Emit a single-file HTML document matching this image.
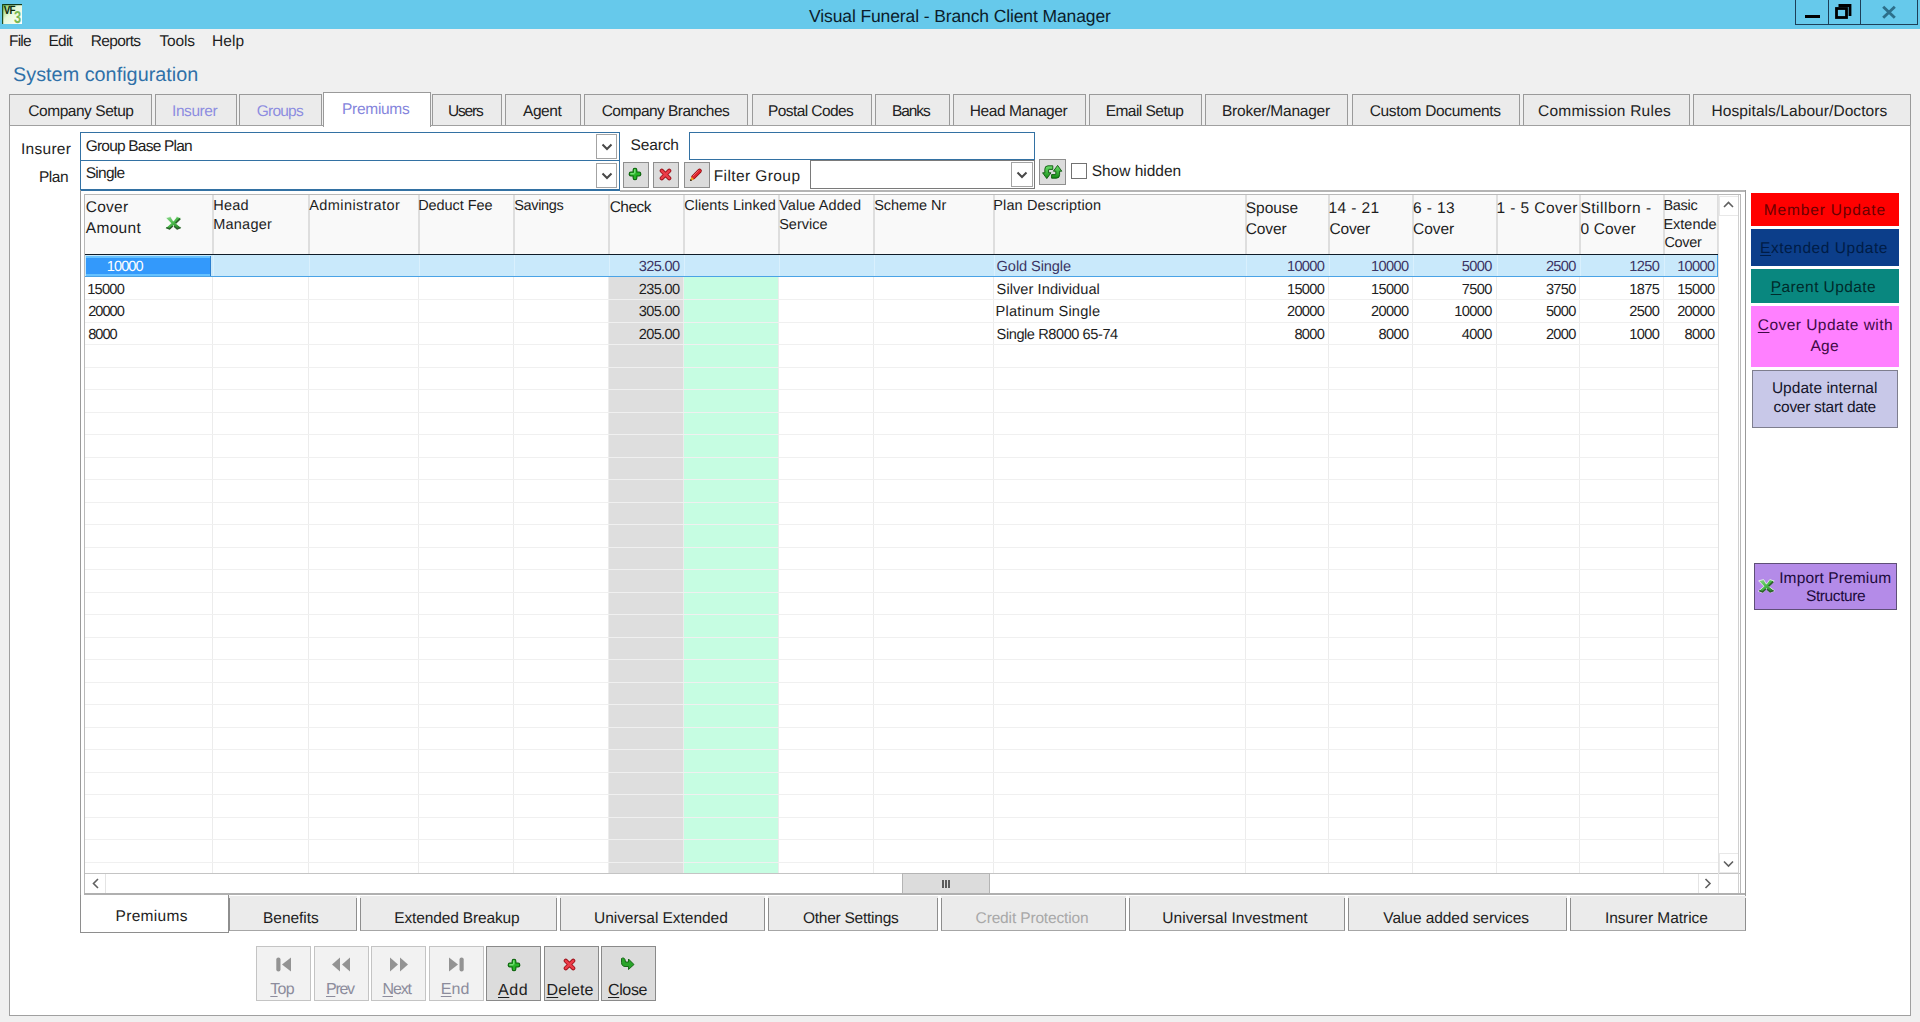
<!DOCTYPE html>
<html><head><meta charset="utf-8"><style>
html,body{margin:0;padding:0;}
body{text-rendering:geometricPrecision;width:1920px;height:1022px;overflow:hidden;background:#f0f0f0;position:relative;font-family:"Liberation Sans",sans-serif;}
body>div,body>svg{position:absolute;}

u{text-decoration:underline;text-underline-offset:2px;}
</style></head><body>
<div style="left:0px;top:0px;width:1920px;height:29px;background:#66c9eb"></div>
<svg style="left:2px;top:4px" width="20" height="20" viewBox="0 0 20 20"><defs><linearGradient id="vg" x1="0" y1="0" x2="1" y2="1"><stop offset="0" stop-color="#6fc24a"/><stop offset="0.45" stop-color="#e6f8d8"/><stop offset="1" stop-color="#ffffff"/></linearGradient></defs><rect x="0" y="0" width="20" height="20" fill="url(#vg)"/><rect x="0" y="0" width="20" height="1.2" fill="#123a1a"/><rect x="0" y="0" width="1.2" height="20" fill="#1f4f1f"/><text transform="translate(1.7,10.4) scale(0.82,1)" font-family="Liberation Sans" font-size="12" font-weight="bold" fill="#0f2a10" letter-spacing="-1">VF</text><text transform="translate(12,18.6) scale(0.78,1.05)" font-family="Liberation Sans" font-size="16.5" font-weight="bold" fill="#7bb955">3</text></svg>
<div style="left:809.00px;top:4.94px;font-size:17.5px;line-height:22px;color:#0b1d2b;white-space:nowrap;letter-spacing:-0.115px;">Visual Funeral - Branch Client Manager</div>
<div style="left:1795px;top:0px;width:34px;height:25px;box-sizing:border-box;border:1px solid #1c3f58;border-top:none"></div>
<div style="left:1828px;top:0px;width:33px;height:25px;box-sizing:border-box;border:1px solid #1c3f58;border-top:none"></div>
<div style="left:1860px;top:0px;width:58px;height:25px;box-sizing:border-box;border:1px solid #1c3f58;border-top:none"></div>
<div style="left:1805px;top:15px;width:15px;height:3px;background:#000"></div>
<svg style="left:1834px;top:4px" width="19" height="16" viewBox="0 0 19 16"><path d="M4.5 1.5h11.5v10.5" fill="none" stroke="#000" stroke-width="2.8"/><rect x="2.5" y="4.5" width="10" height="9" fill="none" stroke="#000" stroke-width="2.8"/></svg>
<svg style="left:1881px;top:5px" width="16" height="15" viewBox="0 0 16 15"><path d="M2.2 1.8L13.8 12.8M13.8 1.8L2.2 12.8" stroke="#2d6f8a" stroke-width="2.9"/></svg>
<div style="left:9.00px;top:31.73px;font-size:15.5px;line-height:19px;color:#1e1e1e;white-space:nowrap;letter-spacing:-0.785px;">File</div>
<div style="left:48.50px;top:31.73px;font-size:15.5px;line-height:19px;color:#1e1e1e;white-space:nowrap;letter-spacing:-0.767px;">Edit</div>
<div style="left:90.80px;top:31.73px;font-size:15.5px;line-height:19px;color:#1e1e1e;white-space:nowrap;letter-spacing:-0.670px;">Reports</div>
<div style="left:159.50px;top:31.73px;font-size:15.5px;line-height:19px;color:#1e1e1e;white-space:nowrap;letter-spacing:-0.159px;">Tools</div>
<div style="left:211.90px;top:31.73px;font-size:15.5px;line-height:19px;color:#1e1e1e;white-space:nowrap;letter-spacing:0.114px;">Help</div>
<div style="left:13.00px;top:62.84px;font-size:19.8px;line-height:25px;color:#2f70a8;white-space:nowrap;letter-spacing:0.031px;">System configuration</div>
<div style="left:9px;top:94px;width:143px;height:32px;box-sizing:border-box;background:#ebebeb;border:1px solid #9a9a9a;border-bottom:none"></div>
<div style="left:28.30px;top:102.23px;font-size:15.5px;line-height:19px;color:#222;white-space:nowrap;letter-spacing:-0.461px;">Company Setup</div>
<div style="left:155px;top:94px;width:82px;height:32px;box-sizing:border-box;background:#ebebeb;border:1px solid #9a9a9a;border-bottom:none"></div>
<div style="left:172.00px;top:102.23px;font-size:15.5px;line-height:19px;color:#8d8de0;white-space:nowrap;letter-spacing:-0.430px;">Insurer</div>
<div style="left:239px;top:94px;width:83px;height:32px;box-sizing:border-box;background:#ebebeb;border:1px solid #9a9a9a;border-bottom:none"></div>
<div style="left:256.70px;top:102.23px;font-size:15.5px;line-height:19px;color:#8d8de0;white-space:nowrap;letter-spacing:-0.756px;">Groups</div>
<div style="left:432px;top:94px;width:70px;height:32px;box-sizing:border-box;background:#ebebeb;border:1px solid #9a9a9a;border-bottom:none"></div>
<div style="left:448.00px;top:102.23px;font-size:15.5px;line-height:19px;color:#222;white-space:nowrap;letter-spacing:-1.181px;">Users</div>
<div style="left:505px;top:94px;width:76px;height:32px;box-sizing:border-box;background:#ebebeb;border:1px solid #9a9a9a;border-bottom:none"></div>
<div style="left:523.00px;top:102.23px;font-size:15.5px;line-height:19px;color:#222;white-space:nowrap;letter-spacing:-0.425px;">Agent</div>
<div style="left:584px;top:94px;width:164px;height:32px;box-sizing:border-box;background:#ebebeb;border:1px solid #9a9a9a;border-bottom:none"></div>
<div style="left:601.70px;top:102.23px;font-size:15.5px;line-height:19px;color:#222;white-space:nowrap;letter-spacing:-0.538px;">Company Branches</div>
<div style="left:752px;top:94px;width:120px;height:32px;box-sizing:border-box;background:#ebebeb;border:1px solid #9a9a9a;border-bottom:none"></div>
<div style="left:768.00px;top:102.23px;font-size:15.5px;line-height:19px;color:#222;white-space:nowrap;letter-spacing:-0.585px;">Postal Codes</div>
<div style="left:875px;top:94px;width:75px;height:32px;box-sizing:border-box;background:#ebebeb;border:1px solid #9a9a9a;border-bottom:none"></div>
<div style="left:892.00px;top:102.23px;font-size:15.5px;line-height:19px;color:#222;white-space:nowrap;letter-spacing:-1.082px;">Banks</div>
<div style="left:953px;top:94px;width:133px;height:32px;box-sizing:border-box;background:#ebebeb;border:1px solid #9a9a9a;border-bottom:none"></div>
<div style="left:969.80px;top:102.23px;font-size:15.5px;line-height:19px;color:#222;white-space:nowrap;letter-spacing:-0.425px;">Head Manager</div>
<div style="left:1089px;top:94px;width:113px;height:32px;box-sizing:border-box;background:#ebebeb;border:1px solid #9a9a9a;border-bottom:none"></div>
<div style="left:1105.70px;top:102.23px;font-size:15.5px;line-height:19px;color:#222;white-space:nowrap;letter-spacing:-0.535px;">Email Setup</div>
<div style="left:1205px;top:94px;width:143px;height:32px;box-sizing:border-box;background:#ebebeb;border:1px solid #9a9a9a;border-bottom:none"></div>
<div style="left:1222.00px;top:102.23px;font-size:15.5px;line-height:19px;color:#222;white-space:nowrap;letter-spacing:-0.229px;">Broker/Manager</div>
<div style="left:1352px;top:94px;width:168px;height:32px;box-sizing:border-box;background:#ebebeb;border:1px solid #9a9a9a;border-bottom:none"></div>
<div style="left:1369.70px;top:102.23px;font-size:15.5px;line-height:19px;color:#222;white-space:nowrap;letter-spacing:-0.317px;">Custom Documents</div>
<div style="left:1523px;top:94px;width:167px;height:32px;box-sizing:border-box;background:#ebebeb;border:1px solid #9a9a9a;border-bottom:none"></div>
<div style="left:1538.00px;top:102.23px;font-size:15.5px;line-height:19px;color:#222;white-space:nowrap;letter-spacing:0.237px;">Commission Rules</div>
<div style="left:1693px;top:94px;width:218px;height:32px;box-sizing:border-box;background:#ebebeb;border:1px solid #9a9a9a;border-bottom:none"></div>
<div style="left:1711.50px;top:102.23px;font-size:15.5px;line-height:19px;color:#222;white-space:nowrap;letter-spacing:0.075px;">Hospitals/Labour/Doctors</div>
<div style="left:9px;top:125px;width:1902px;height:891px;box-sizing:border-box;background:#fff;border:1px solid #a0a0a0"></div>
<div style="left:323px;top:92px;width:108px;height:35px;box-sizing:border-box;background:#fff;border:1px solid #9a9a9a;border-bottom:none"></div>
<div style="left:342.00px;top:99.63px;font-size:15.5px;line-height:19px;color:#8585dc;white-space:nowrap;letter-spacing:-0.287px;">Premiums</div>
<div style="left:20.90px;top:139.73px;font-size:15.5px;line-height:19px;color:#1e1e1e;white-space:nowrap;letter-spacing:0.303px;">Insurer</div>
<div style="left:38.90px;top:168.13px;font-size:15.5px;line-height:19px;color:#1e1e1e;white-space:nowrap;letter-spacing:-0.401px;">Plan</div>
<div style="left:80px;top:132px;width:540px;height:29px;box-sizing:border-box;border:1px solid #3371a3;background:#fff"></div>
<div style="left:80px;top:160px;width:540px;height:31px;box-sizing:border-box;border:1px solid #3371a3;border-bottom-width:2px;background:#fff"></div>
<div style="left:85.70px;top:136.63px;font-size:15.5px;line-height:19px;color:#1e1e1e;white-space:nowrap;letter-spacing:-0.795px;">Group Base Plan</div>
<div style="left:85.70px;top:164.13px;font-size:15.5px;line-height:19px;color:#1e1e1e;white-space:nowrap;letter-spacing:-0.733px;">Single</div>
<div style="left:596px;top:134px;width:21px;height:25px;box-sizing:border-box;border:1px solid #a3a3a3;background:#fff"></div>
<svg style="left:600.5px;top:142.5px" width="12" height="8" viewBox="0 0 12 8"><path d="M1.5 1.5L6 6L10.5 1.5" fill="none" stroke="#484848" stroke-width="2"/></svg>
<div style="left:596px;top:163px;width:21px;height:25px;box-sizing:border-box;border:1px solid #a3a3a3;background:#fff"></div>
<svg style="left:600.5px;top:171.5px" width="12" height="8" viewBox="0 0 12 8"><path d="M1.5 1.5L6 6L10.5 1.5" fill="none" stroke="#484848" stroke-width="2"/></svg>
<div style="left:630.60px;top:135.63px;font-size:15.5px;line-height:19px;color:#1e1e1e;white-space:nowrap;letter-spacing:-0.158px;">Search</div>
<div style="left:689px;top:132px;width:346px;height:28px;box-sizing:border-box;border:1px solid #3371a3;background:#fff"></div>
<div style="left:623px;top:162px;width:26px;height:26px;box-sizing:border-box;border:1px solid #8e8e8e;background:#dcdcdc"></div>
<div style="left:653px;top:162px;width:26px;height:26px;box-sizing:border-box;border:1px solid #8e8e8e;background:#dcdcdc"></div>
<div style="left:684px;top:162px;width:26px;height:26px;box-sizing:border-box;border:1px solid #8e8e8e;background:#dcdcdc"></div>
<svg style="left:627.5px;top:167px" width="14" height="14" viewBox="0 0 14 14"><rect x="4.6" y="0.7" width="4.8" height="12.6" rx="2.2" fill="#0b5f0b"/><rect x="0.7" y="4.6" width="12.6" height="4.8" rx="2.2" fill="#0b5f0b"/><rect x="5.6" y="1.7" width="2.8" height="10.6" rx="1.3" fill="#27b327"/><rect x="1.7" y="5.6" width="10.6" height="2.8" rx="1.3" fill="#27b327"/><rect x="6.2" y="2.4" width="1.2" height="4" fill="#8ae88a"/><rect x="2.4" y="6.2" width="4" height="1.2" fill="#8ae88a"/></svg>
<svg style="left:658.5px;top:167.5px" width="13" height="13" viewBox="0 0 13 13"><path d="M2.8 2.8L10.2 10.2M10.2 2.8L2.8 10.2" stroke="#9a1018" stroke-width="4.2" stroke-linecap="round"/><path d="M2.8 2.8L10.2 10.2M10.2 2.8L2.8 10.2" stroke="#ec3c48" stroke-width="2.6" stroke-linecap="round"/></svg>
<svg style="left:688px;top:167px" width="16" height="16" viewBox="0 0 16 16"><path d="M5.3 10.2L11.6 3.9" stroke="#8c0e12" stroke-width="4.4" stroke-linecap="round"/><path d="M5.3 10.2L11.6 3.9" stroke="#e0262e" stroke-width="3" stroke-linecap="round"/><path d="M4.9 9.1L10.6 3.4" stroke="#f07a7a" stroke-width="0.8"/><path d="M3.4 9.8L6.2 12.6L2 14Z" fill="#f2a21c"/><path d="M2 14L2.6 11.9L4.1 13.4Z" fill="#111"/></svg>
<div style="left:713.70px;top:167.13px;font-size:15.5px;line-height:19px;color:#1e1e1e;white-space:nowrap;letter-spacing:0.408px;">Filter Group</div>
<div style="left:810px;top:160px;width:225px;height:29px;box-sizing:border-box;border:1px solid #7a7a7a;background:#fff"></div>
<div style="left:1011px;top:162px;width:22px;height:25px;box-sizing:border-box;border:1px solid #a3a3a3;background:#fff"></div>
<svg style="left:1016.0px;top:170.5px" width="12" height="8" viewBox="0 0 12 8"><path d="M1.5 1.5L6 6L10.5 1.5" fill="none" stroke="#484848" stroke-width="2"/></svg>
<div style="left:1039px;top:159px;width:27px;height:26px;box-sizing:border-box;border:1px solid #8e8e8e;background:#dcdcdc"></div>
<svg style="left:1042px;top:165px" width="21" height="15" viewBox="0 0 21 15"><defs><linearGradient id="rg" x1="0" y1="0" x2="0" y2="1"><stop offset="0" stop-color="#6ee06e"/><stop offset="1" stop-color="#128a12"/></linearGradient></defs><path d="M10.8 0.8H6Q2.8 0.8 2.8 4.3V7.8H0.6L4.8 13.6L9 7.8H6.6V5Q6.6 4.4 7.2 4.4H10.8Z" fill="url(#rg)" stroke="#0a560a" stroke-width="0.9"/><path d="M9.6 13.2H14.4Q17.6 13.2 17.6 9.7V6.2H19.8L15.6 0.4L11.4 6.2H13.8V9Q13.8 9.6 13.2 9.6H9.6Z" fill="url(#rg)" stroke="#0a560a" stroke-width="0.9"/></svg>
<div style="left:1071px;top:163px;width:16px;height:16px;box-sizing:border-box;border:1px solid #727272;background:#fff"></div>
<div style="left:1091.70px;top:162.13px;font-size:15.5px;line-height:19px;color:#1e1e1e;white-space:nowrap;letter-spacing:-0.020px;">Show hidden</div>
<div style="left:620px;top:190px;width:1126px;height:2px;background:#b4b4b4"></div>
<div style="left:80px;top:190px;width:1px;height:743px;background:#9a9a9a"></div>
<div style="left:1745px;top:190px;width:1px;height:741px;background:#9a9a9a"></div>
<div style="left:84px;top:194px;width:1657px;height:701px;box-sizing:border-box;border:1px solid #b9b9b9;background:#fff"></div>
<div style="left:85px;top:195px;width:1633px;height:59px;background:#f9f9f9"></div>
<div style="left:212px;top:195px;width:2px;height:59px;background:#dedede"></div>
<div style="left:308px;top:195px;width:2px;height:59px;background:#dedede"></div>
<div style="left:418px;top:195px;width:2px;height:59px;background:#dedede"></div>
<div style="left:513px;top:195px;width:2px;height:59px;background:#dedede"></div>
<div style="left:608px;top:195px;width:2px;height:59px;background:#dedede"></div>
<div style="left:683px;top:195px;width:2px;height:59px;background:#dedede"></div>
<div style="left:778px;top:195px;width:2px;height:59px;background:#dedede"></div>
<div style="left:873px;top:195px;width:2px;height:59px;background:#dedede"></div>
<div style="left:993px;top:195px;width:2px;height:59px;background:#dedede"></div>
<div style="left:1245px;top:195px;width:2px;height:59px;background:#dedede"></div>
<div style="left:1328px;top:195px;width:2px;height:59px;background:#dedede"></div>
<div style="left:1412px;top:195px;width:2px;height:59px;background:#dedede"></div>
<div style="left:1496px;top:195px;width:2px;height:59px;background:#dedede"></div>
<div style="left:1579px;top:195px;width:2px;height:59px;background:#dedede"></div>
<div style="left:1663px;top:195px;width:2px;height:59px;background:#dedede"></div>
<div style="left:1717px;top:195px;width:1px;height:59px;background:#dedede"></div>
<div style="left:608px;top:277px;width:75px;height:596px;background:#dedede"></div>
<div style="left:684px;top:277px;width:94px;height:596px;background:#c6fde2"></div>
<div style="left:212px;top:277px;width:1px;height:596px;background:#ececec"></div>
<div style="left:308px;top:277px;width:1px;height:596px;background:#ececec"></div>
<div style="left:418px;top:277px;width:1px;height:596px;background:#ececec"></div>
<div style="left:513px;top:277px;width:1px;height:596px;background:#ececec"></div>
<div style="left:608px;top:277px;width:1px;height:596px;background:#ececec"></div>
<div style="left:683px;top:277px;width:1px;height:596px;background:#ececec"></div>
<div style="left:778px;top:277px;width:1px;height:596px;background:#ececec"></div>
<div style="left:873px;top:277px;width:1px;height:596px;background:#ececec"></div>
<div style="left:993px;top:277px;width:1px;height:596px;background:#ececec"></div>
<div style="left:1245px;top:277px;width:1px;height:596px;background:#ececec"></div>
<div style="left:1328px;top:277px;width:1px;height:596px;background:#ececec"></div>
<div style="left:1412px;top:277px;width:1px;height:596px;background:#ececec"></div>
<div style="left:1496px;top:277px;width:1px;height:596px;background:#ececec"></div>
<div style="left:1579px;top:277px;width:1px;height:596px;background:#ececec"></div>
<div style="left:1663px;top:277px;width:1px;height:596px;background:#ececec"></div>
<div style="left:85px;top:299px;width:1633px;height:1px;background:#f0f0f0"></div>
<div style="left:85px;top:322px;width:1633px;height:1px;background:#f0f0f0"></div>
<div style="left:85px;top:344px;width:1633px;height:1px;background:#f0f0f0"></div>
<div style="left:85px;top:367px;width:1633px;height:1px;background:#f0f0f0"></div>
<div style="left:85px;top:389px;width:1633px;height:1px;background:#f0f0f0"></div>
<div style="left:85px;top:412px;width:1633px;height:1px;background:#f0f0f0"></div>
<div style="left:85px;top:434px;width:1633px;height:1px;background:#f0f0f0"></div>
<div style="left:85px;top:457px;width:1633px;height:1px;background:#f0f0f0"></div>
<div style="left:85px;top:479px;width:1633px;height:1px;background:#f0f0f0"></div>
<div style="left:85px;top:502px;width:1633px;height:1px;background:#f0f0f0"></div>
<div style="left:85px;top:524px;width:1633px;height:1px;background:#f0f0f0"></div>
<div style="left:85px;top:547px;width:1633px;height:1px;background:#f0f0f0"></div>
<div style="left:85px;top:569px;width:1633px;height:1px;background:#f0f0f0"></div>
<div style="left:85px;top:592px;width:1633px;height:1px;background:#f0f0f0"></div>
<div style="left:85px;top:614px;width:1633px;height:1px;background:#f0f0f0"></div>
<div style="left:85px;top:637px;width:1633px;height:1px;background:#f0f0f0"></div>
<div style="left:85px;top:659px;width:1633px;height:1px;background:#f0f0f0"></div>
<div style="left:85px;top:682px;width:1633px;height:1px;background:#f0f0f0"></div>
<div style="left:85px;top:704px;width:1633px;height:1px;background:#f0f0f0"></div>
<div style="left:85px;top:727px;width:1633px;height:1px;background:#f0f0f0"></div>
<div style="left:85px;top:749px;width:1633px;height:1px;background:#f0f0f0"></div>
<div style="left:85px;top:772px;width:1633px;height:1px;background:#f0f0f0"></div>
<div style="left:85px;top:794px;width:1633px;height:1px;background:#f0f0f0"></div>
<div style="left:85px;top:817px;width:1633px;height:1px;background:#f0f0f0"></div>
<div style="left:85px;top:839px;width:1633px;height:1px;background:#f0f0f0"></div>
<div style="left:85px;top:862px;width:1633px;height:1px;background:#f0f0f0"></div>
<div style="left:85px;top:254px;width:1633px;height:1px;background:#101c28"></div>
<div style="left:85px;top:255px;width:1633px;height:21px;background:#c9e9fb"></div>
<div style="left:85px;top:276px;width:1633px;height:1px;background:#4aa3e6"></div>
<div style="left:1717px;top:255px;width:1px;height:22px;background:#4aa3e6"></div>
<div style="left:213px;top:255px;width:1px;height:21px;background:#d9f0fd"></div>
<div style="left:309px;top:255px;width:1px;height:21px;background:#d9f0fd"></div>
<div style="left:419px;top:255px;width:1px;height:21px;background:#d9f0fd"></div>
<div style="left:514px;top:255px;width:1px;height:21px;background:#d9f0fd"></div>
<div style="left:609px;top:255px;width:1px;height:21px;background:#d9f0fd"></div>
<div style="left:684px;top:255px;width:1px;height:21px;background:#d9f0fd"></div>
<div style="left:779px;top:255px;width:1px;height:21px;background:#d9f0fd"></div>
<div style="left:874px;top:255px;width:1px;height:21px;background:#d9f0fd"></div>
<div style="left:994px;top:255px;width:1px;height:21px;background:#d9f0fd"></div>
<div style="left:1246px;top:255px;width:1px;height:21px;background:#d9f0fd"></div>
<div style="left:1329px;top:255px;width:1px;height:21px;background:#d9f0fd"></div>
<div style="left:1413px;top:255px;width:1px;height:21px;background:#d9f0fd"></div>
<div style="left:1497px;top:255px;width:1px;height:21px;background:#d9f0fd"></div>
<div style="left:1580px;top:255px;width:1px;height:21px;background:#d9f0fd"></div>
<div style="left:1664px;top:255px;width:1px;height:21px;background:#d9f0fd"></div>
<div style="left:86px;top:256px;width:125px;height:20px;background:#66c2ff"></div>
<div style="left:86px;top:258px;width:125px;height:16px;background:#3399fb"></div>
<div style="left:210px;top:256px;width:1px;height:20px;background:#2a7fd0"></div>
<div style="left:85.80px;top:197.63px;font-size:15.5px;line-height:19px;color:#1e1e1e;white-space:nowrap;letter-spacing:0.254px;">Cover</div>
<div style="left:85.80px;top:219.13px;font-size:15.5px;line-height:19px;color:#1e1e1e;white-space:nowrap;letter-spacing:0.318px;">Amount</div>
<div style="left:213.20px;top:197.28px;font-size:14.5px;line-height:18px;color:#1e1e1e;white-space:nowrap;letter-spacing:0.233px;">Head</div>
<div style="left:213.20px;top:216.28px;font-size:14.5px;line-height:18px;color:#1e1e1e;white-space:nowrap;letter-spacing:0.233px;">Manager</div>
<div style="left:309.20px;top:197.28px;font-size:14.5px;line-height:18px;color:#1e1e1e;white-space:nowrap;letter-spacing:0.435px;">Administrator</div>
<div style="left:418.20px;top:197.28px;font-size:14.5px;line-height:18px;color:#1e1e1e;white-space:nowrap;letter-spacing:-0.066px;">Deduct Fee</div>
<div style="left:514.20px;top:197.28px;font-size:14.5px;line-height:18px;color:#1e1e1e;white-space:nowrap;letter-spacing:-0.339px;">Savings</div>
<div style="left:609.70px;top:197.63px;font-size:15.5px;line-height:19px;color:#1e1e1e;white-space:nowrap;letter-spacing:-0.546px;">Check</div>
<div style="left:684.20px;top:197.28px;font-size:14.5px;line-height:18px;color:#1e1e1e;white-space:nowrap;letter-spacing:0.045px;">Clients Linked</div>
<div style="left:779.20px;top:197.28px;font-size:14.5px;line-height:18px;color:#1e1e1e;white-space:nowrap;letter-spacing:0.060px;">Value Added</div>
<div style="left:779.20px;top:216.28px;font-size:14.5px;line-height:18px;color:#1e1e1e;white-space:nowrap;">Service</div>
<div style="left:874.20px;top:197.28px;font-size:14.5px;line-height:18px;color:#1e1e1e;white-space:nowrap;letter-spacing:-0.049px;">Scheme Nr</div>
<div style="left:993.20px;top:197.28px;font-size:14.5px;line-height:18px;color:#1e1e1e;white-space:nowrap;letter-spacing:0.152px;">Plan Description</div>
<div style="left:1245.80px;top:199.13px;font-size:15.5px;line-height:19px;color:#1e1e1e;white-space:nowrap;letter-spacing:-0.050px;">Spouse</div>
<div style="left:1245.80px;top:219.63px;font-size:15.5px;line-height:19px;color:#1e1e1e;white-space:nowrap;letter-spacing:-0.121px;">Cover</div>
<div style="left:1328.50px;top:199.13px;font-size:15.5px;line-height:19px;color:#1e1e1e;white-space:nowrap;letter-spacing:0.394px;">14 - 21</div>
<div style="left:1329.50px;top:219.63px;font-size:15.5px;line-height:19px;color:#1e1e1e;white-space:nowrap;letter-spacing:-0.171px;">Cover</div>
<div style="left:1413.00px;top:199.13px;font-size:15.5px;line-height:19px;color:#1e1e1e;white-space:nowrap;letter-spacing:0.397px;">6 - 13</div>
<div style="left:1413.00px;top:219.63px;font-size:15.5px;line-height:19px;color:#1e1e1e;white-space:nowrap;letter-spacing:-0.046px;">Cover</div>
<div style="left:1496.50px;top:199.13px;font-size:15.5px;line-height:19px;color:#1e1e1e;white-space:nowrap;letter-spacing:0.419px;">1 - 5 Cover</div>
<div style="left:1580.40px;top:199.13px;font-size:15.5px;line-height:19px;color:#1e1e1e;white-space:nowrap;letter-spacing:0.530px;">Stillborn -</div>
<div style="left:1580.40px;top:219.63px;font-size:15.5px;line-height:19px;color:#1e1e1e;white-space:nowrap;letter-spacing:0.165px;">0 Cover</div>
<div style="left:1663.40px;top:197.28px;font-size:14.5px;line-height:18px;color:#1e1e1e;white-space:nowrap;letter-spacing:-0.277px;">Basic</div>
<div style="left:1663.40px;top:215.78px;font-size:14.5px;line-height:18px;color:#1e1e1e;white-space:nowrap;width:53.60px;overflow:hidden;">Extended</div>
<div style="left:1664.40px;top:234.28px;font-size:14.5px;line-height:18px;color:#1e1e1e;white-space:nowrap;letter-spacing:-0.312px;">Cover</div>
<svg style="left:165px;top:215.8px" width="17" height="15" viewBox="0 0 17 15"><defs><linearGradient id="xg1" x1="0" y1="0" x2="1" y2="1"><stop offset="0" stop-color="#93d893"/><stop offset="0.45" stop-color="#4cbc4c"/><stop offset="1" stop-color="#1f6f1f"/></linearGradient></defs><path d="M0.6 1.8L5.6 0.6L8.4 5.2L11.8 0.6L16.2 2L10.8 7.3L16.4 11.8L12.1 13.8L8.4 9.6L4.5 13.8L0.4 12.2L6 7.3Z" fill="url(#xg1)" stroke="#ffffff" stroke-width="1" stroke-opacity="0.7"/><path d="M15.2 2.6L10.6 7.2" stroke="#2b5e2b" stroke-width="1.6"/><path d="M1.2 11.6L4.6 12.8L7.8 10" stroke="#2b5e2b" stroke-width="1.5" fill="none"/><path d="M9 10.2L12.2 12.9L15.6 11.6" stroke="#2b5e2b" stroke-width="1.5" fill="none"/></svg>
<div style="left:106.80px;top:258.24px;font-size:14.6px;line-height:18px;color:#ffffff;white-space:nowrap;letter-spacing:-0.941px;">10000</div>
<div style="left:87.20px;top:280.69px;font-size:14.6px;line-height:18px;color:#1e1e1e;white-space:nowrap;letter-spacing:-0.741px;">15000</div>
<div style="left:88.20px;top:303.14px;font-size:14.6px;line-height:18px;color:#1e1e1e;white-space:nowrap;letter-spacing:-0.991px;">20000</div>
<div style="left:88.20px;top:325.59px;font-size:14.6px;line-height:18px;color:#1e1e1e;white-space:nowrap;letter-spacing:-1.016px;">8000</div>
<div style="left:638.73px;top:258.24px;font-size:14.6px;line-height:18px;color:#3b3564;white-space:nowrap;letter-spacing:-0.650px;">325.00</div>
<div style="left:996.60px;top:258.24px;font-size:14.6px;line-height:18px;color:#3b3564;white-space:nowrap;letter-spacing:-0.093px;">Gold Single</div>
<div style="left:1286.93px;top:258.24px;font-size:14.6px;line-height:18px;color:#3b3564;white-space:nowrap;letter-spacing:-0.650px;">10000</div>
<div style="left:1371.03px;top:258.24px;font-size:14.6px;line-height:18px;color:#3b3564;white-space:nowrap;letter-spacing:-0.650px;">10000</div>
<div style="left:1461.80px;top:258.24px;font-size:14.6px;line-height:18px;color:#3b3564;white-space:nowrap;letter-spacing:-0.650px;">5000</div>
<div style="left:1545.90px;top:258.24px;font-size:14.6px;line-height:18px;color:#3b3564;white-space:nowrap;letter-spacing:-0.650px;">2500</div>
<div style="left:1629.30px;top:258.24px;font-size:14.6px;line-height:18px;color:#3b3564;white-space:nowrap;letter-spacing:-0.650px;">1250</div>
<div style="left:1677.13px;top:258.24px;font-size:14.6px;line-height:18px;color:#3b3564;white-space:nowrap;letter-spacing:-0.650px;">10000</div>
<div style="left:638.73px;top:280.69px;font-size:14.6px;line-height:18px;color:#1e1e1e;white-space:nowrap;letter-spacing:-0.650px;">235.00</div>
<div style="left:996.60px;top:280.69px;font-size:14.6px;line-height:18px;color:#1e1e1e;white-space:nowrap;letter-spacing:0.065px;">Silver Individual</div>
<div style="left:1286.93px;top:280.69px;font-size:14.6px;line-height:18px;color:#1e1e1e;white-space:nowrap;letter-spacing:-0.650px;">15000</div>
<div style="left:1371.03px;top:280.69px;font-size:14.6px;line-height:18px;color:#1e1e1e;white-space:nowrap;letter-spacing:-0.650px;">15000</div>
<div style="left:1461.80px;top:280.69px;font-size:14.6px;line-height:18px;color:#1e1e1e;white-space:nowrap;letter-spacing:-0.650px;">7500</div>
<div style="left:1545.90px;top:280.69px;font-size:14.6px;line-height:18px;color:#1e1e1e;white-space:nowrap;letter-spacing:-0.650px;">3750</div>
<div style="left:1629.30px;top:280.69px;font-size:14.6px;line-height:18px;color:#1e1e1e;white-space:nowrap;letter-spacing:-0.650px;">1875</div>
<div style="left:1677.13px;top:280.69px;font-size:14.6px;line-height:18px;color:#1e1e1e;white-space:nowrap;letter-spacing:-0.650px;">15000</div>
<div style="left:638.73px;top:303.14px;font-size:14.6px;line-height:18px;color:#1e1e1e;white-space:nowrap;letter-spacing:-0.650px;">305.00</div>
<div style="left:995.60px;top:303.14px;font-size:14.6px;line-height:18px;color:#1e1e1e;white-space:nowrap;letter-spacing:0.223px;">Platinum Single</div>
<div style="left:1286.93px;top:303.14px;font-size:14.6px;line-height:18px;color:#1e1e1e;white-space:nowrap;letter-spacing:-0.650px;">20000</div>
<div style="left:1371.03px;top:303.14px;font-size:14.6px;line-height:18px;color:#1e1e1e;white-space:nowrap;letter-spacing:-0.650px;">20000</div>
<div style="left:1454.33px;top:303.14px;font-size:14.6px;line-height:18px;color:#1e1e1e;white-space:nowrap;letter-spacing:-0.650px;">10000</div>
<div style="left:1545.90px;top:303.14px;font-size:14.6px;line-height:18px;color:#1e1e1e;white-space:nowrap;letter-spacing:-0.650px;">5000</div>
<div style="left:1629.30px;top:303.14px;font-size:14.6px;line-height:18px;color:#1e1e1e;white-space:nowrap;letter-spacing:-0.650px;">2500</div>
<div style="left:1677.13px;top:303.14px;font-size:14.6px;line-height:18px;color:#1e1e1e;white-space:nowrap;letter-spacing:-0.650px;">20000</div>
<div style="left:638.73px;top:325.59px;font-size:14.6px;line-height:18px;color:#1e1e1e;white-space:nowrap;letter-spacing:-0.650px;">205.00</div>
<div style="left:996.60px;top:325.59px;font-size:14.6px;line-height:18px;color:#1e1e1e;white-space:nowrap;letter-spacing:-0.435px;">Single R8000 65-74</div>
<div style="left:1294.40px;top:325.59px;font-size:14.6px;line-height:18px;color:#1e1e1e;white-space:nowrap;letter-spacing:-0.650px;">8000</div>
<div style="left:1378.50px;top:325.59px;font-size:14.6px;line-height:18px;color:#1e1e1e;white-space:nowrap;letter-spacing:-0.650px;">8000</div>
<div style="left:1461.80px;top:325.59px;font-size:14.6px;line-height:18px;color:#1e1e1e;white-space:nowrap;letter-spacing:-0.650px;">4000</div>
<div style="left:1545.90px;top:325.59px;font-size:14.6px;line-height:18px;color:#1e1e1e;white-space:nowrap;letter-spacing:-0.650px;">2000</div>
<div style="left:1629.30px;top:325.59px;font-size:14.6px;line-height:18px;color:#1e1e1e;white-space:nowrap;letter-spacing:-0.650px;">1000</div>
<div style="left:1684.60px;top:325.59px;font-size:14.6px;line-height:18px;color:#1e1e1e;white-space:nowrap;letter-spacing:-0.650px;">8000</div>
<div style="left:1718px;top:195px;width:22px;height:678px;background:#fff"></div>
<div style="left:1718px;top:195px;width:1px;height:678px;background:#e2e2e2"></div>
<div style="left:1719px;top:196px;width:20px;height:20px;box-sizing:border-box;border:1px solid #e8e8e8;background:#fff"></div>
<div style="left:1719px;top:853px;width:20px;height:20px;box-sizing:border-box;border:1px solid #e8e8e8;background:#fff"></div>
<svg style="left:1723.0px;top:201px" width="11" height="8" viewBox="0 0 11 8"><path d="M1 6L5.5 1.5L10 6" fill="none" stroke="#606060" stroke-width="1.6"/></svg>
<svg style="left:1723.0px;top:859.5px" width="11" height="8" viewBox="0 0 11 8"><path d="M1 1.5L5.5 6L10 1.5" fill="none" stroke="#606060" stroke-width="1.6"/></svg>
<div style="left:85px;top:873px;width:1655px;height:1px;background:#c4c4c4"></div>
<div style="left:85px;top:874px;width:1633px;height:20px;background:#fff"></div>
<div style="left:85px;top:874px;width:21px;height:20px;box-sizing:border-box;border-right:1px solid #e4e4e4"></div>
<div style="left:1698px;top:874px;width:20px;height:20px;box-sizing:border-box;border-left:1px solid #e4e4e4"></div>
<div style="left:1718px;top:873px;width:1px;height:21px;background:#e4e4e4"></div>
<svg style="left:91.5px;top:878.0px" width="8" height="11" viewBox="0 0 8 11"><path d="M6 1L1.5 5.5L6 10" fill="none" stroke="#606060" stroke-width="1.6"/></svg>
<svg style="left:1704px;top:878.0px" width="8" height="11" viewBox="0 0 8 11"><path d="M1.5 1L6 5.5L1.5 10" fill="none" stroke="#606060" stroke-width="1.6"/></svg>
<div style="left:902px;top:873px;width:88px;height:21px;box-sizing:border-box;border:1px solid #b4b4b4;background:#dcdcdc"></div>
<div style="left:942px;top:880px;width:2px;height:8px;background:#5a5a5a"></div>
<div style="left:945px;top:880px;width:2px;height:8px;background:#5a5a5a"></div>
<div style="left:948px;top:880px;width:2px;height:8px;background:#5a5a5a"></div>
<div style="left:1738px;top:195px;width:1px;height:699px;background:#d0d0d0"></div>
<div style="left:84px;top:893px;width:1661px;height:2px;background:#b0b0b0"></div>
<div style="left:229px;top:896px;width:128px;height:35px;box-sizing:border-box;background:#ebebeb;border:1px solid #8e8e8e;border-top:none;border-bottom-color:#a6a6a6"></div>
<div style="left:229px;top:896px;width:128px;height:2px;background:#ebebeb"></div>
<div style="left:263.00px;top:909.33px;font-size:15.5px;line-height:19px;color:#1e1e1e;white-space:nowrap;letter-spacing:-0.037px;">Benefits</div>
<div style="left:360px;top:896px;width:197px;height:35px;box-sizing:border-box;background:#ebebeb;border:1px solid #8e8e8e;border-top:none;border-bottom-color:#a6a6a6"></div>
<div style="left:360px;top:896px;width:197px;height:2px;background:#ebebeb"></div>
<div style="left:394.30px;top:909.33px;font-size:15.5px;line-height:19px;color:#1e1e1e;white-space:nowrap;letter-spacing:-0.148px;">Extended Breakup</div>
<div style="left:560px;top:896px;width:205px;height:35px;box-sizing:border-box;background:#ebebeb;border:1px solid #8e8e8e;border-top:none;border-bottom-color:#a6a6a6"></div>
<div style="left:560px;top:896px;width:205px;height:2px;background:#ebebeb"></div>
<div style="left:594.00px;top:909.33px;font-size:15.5px;line-height:19px;color:#1e1e1e;white-space:nowrap;letter-spacing:-0.034px;">Universal Extended</div>
<div style="left:768px;top:896px;width:170px;height:35px;box-sizing:border-box;background:#ebebeb;border:1px solid #8e8e8e;border-top:none;border-bottom-color:#a6a6a6"></div>
<div style="left:768px;top:896px;width:170px;height:2px;background:#ebebeb"></div>
<div style="left:803.00px;top:909.33px;font-size:15.5px;line-height:19px;color:#1e1e1e;white-space:nowrap;letter-spacing:-0.256px;">Other Settings</div>
<div style="left:941px;top:896px;width:185px;height:35px;box-sizing:border-box;background:#ebebeb;border:1px solid #8e8e8e;border-top:none;border-bottom-color:#a6a6a6"></div>
<div style="left:941px;top:896px;width:185px;height:2px;background:#ebebeb"></div>
<div style="left:975.60px;top:909.33px;font-size:15.5px;line-height:19px;color:#a8a8a8;white-space:nowrap;letter-spacing:-0.151px;">Credit Protection</div>
<div style="left:1129px;top:896px;width:216px;height:35px;box-sizing:border-box;background:#ebebeb;border:1px solid #8e8e8e;border-top:none;border-bottom-color:#a6a6a6"></div>
<div style="left:1129px;top:896px;width:216px;height:2px;background:#ebebeb"></div>
<div style="left:1162.30px;top:909.33px;font-size:15.5px;line-height:19px;color:#1e1e1e;white-space:nowrap;letter-spacing:0.031px;">Universal Investment</div>
<div style="left:1348px;top:896px;width:219px;height:35px;box-sizing:border-box;background:#ebebeb;border:1px solid #8e8e8e;border-top:none;border-bottom-color:#a6a6a6"></div>
<div style="left:1348px;top:896px;width:219px;height:2px;background:#ebebeb"></div>
<div style="left:1383.30px;top:909.33px;font-size:15.5px;line-height:19px;color:#1e1e1e;white-space:nowrap;letter-spacing:-0.069px;">Value added services</div>
<div style="left:1570px;top:896px;width:176px;height:35px;box-sizing:border-box;background:#ebebeb;border:1px solid #8e8e8e;border-top:none;border-bottom-color:#a6a6a6"></div>
<div style="left:1570px;top:896px;width:176px;height:2px;background:#ebebeb"></div>
<div style="left:1605.00px;top:909.33px;font-size:15.5px;line-height:19px;color:#1e1e1e;white-space:nowrap;letter-spacing:-0.031px;">Insurer Matrice</div>
<div style="left:80px;top:895px;width:149px;height:38px;box-sizing:border-box;background:#fff;border:1px solid #8e8e8e;border-top:none"></div>
<div style="left:115.50px;top:907.13px;font-size:15.5px;line-height:19px;color:#1e1e1e;white-space:nowrap;letter-spacing:0.327px;">Premiums</div>
<div style="left:256px;top:946px;width:55px;height:55px;box-sizing:border-box;background:#f2f2f2;border:1px solid #c4c4c4"></div>
<div style="left:270.30px;top:979.96px;font-size:16px;line-height:20px;color:#8c8c9c;white-space:nowrap;letter-spacing:-0.699px;"><u>T</u>op</div>
<div style="left:314px;top:946px;width:55px;height:55px;box-sizing:border-box;background:#f2f2f2;border:1px solid #c4c4c4"></div>
<div style="left:326.00px;top:979.96px;font-size:16px;line-height:20px;color:#8c8c9c;white-space:nowrap;letter-spacing:-1.299px;"><u>P</u>rev</div>
<div style="left:371px;top:946px;width:55px;height:55px;box-sizing:border-box;background:#f2f2f2;border:1px solid #c4c4c4"></div>
<div style="left:382.50px;top:979.96px;font-size:16px;line-height:20px;color:#8c8c9c;white-space:nowrap;letter-spacing:-1.151px;"><u>N</u>ext</div>
<div style="left:429px;top:946px;width:55px;height:55px;box-sizing:border-box;background:#f2f2f2;border:1px solid #c4c4c4"></div>
<div style="left:440.80px;top:979.96px;font-size:16px;line-height:20px;color:#8c8c9c;white-space:nowrap;letter-spacing:0.065px;"><u>E</u>nd</div>
<div style="left:486px;top:946px;width:55px;height:55px;box-sizing:border-box;background:#dcdcdc;border:1px solid #8a8a8a"></div>
<div style="left:498.00px;top:980.76px;font-size:16px;line-height:20px;color:#1e1e1e;white-space:nowrap;letter-spacing:0.615px;"><u>A</u>dd</div>
<div style="left:544px;top:946px;width:55px;height:55px;box-sizing:border-box;background:#dcdcdc;border:1px solid #8a8a8a"></div>
<div style="left:546.50px;top:980.76px;font-size:16px;line-height:20px;color:#1e1e1e;white-space:nowrap;letter-spacing:0.130px;"><u>D</u>elete</div>
<div style="left:601px;top:946px;width:55px;height:55px;box-sizing:border-box;background:#dcdcdc;border:1px solid #8a8a8a"></div>
<div style="left:608.00px;top:980.76px;font-size:16px;line-height:20px;color:#1e1e1e;white-space:nowrap;letter-spacing:-0.377px;"><u>C</u>lose</div>
<svg style="left:276px;top:957px" width="16" height="15" viewBox="0 0 16 15"><rect x="0.3" y="0.5" width="4.2" height="14" rx="2" fill="#939393"/><path d="M15 0.5V14.5L6 7.5Z" fill="#939393"/></svg>
<svg style="left:331px;top:957px" width="20" height="15" viewBox="0 0 20 15"><path d="M9 0.5V14.5L1 7.5Z" fill="#939393"/><path d="M19 0.5V14.5L11 7.5Z" fill="#939393"/></svg>
<svg style="left:389px;top:957px" width="20" height="15" viewBox="0 0 20 15"><path d="M1 0.5V14.5L9 7.5Z" fill="#939393"/><path d="M11 0.5V14.5L19 7.5Z" fill="#939393"/></svg>
<svg style="left:448px;top:957px" width="16" height="15" viewBox="0 0 16 15"><path d="M1 0.5V14.5L10 7.5Z" fill="#939393"/><rect x="11.5" y="0.5" width="4.2" height="14" rx="2" fill="#939393"/></svg>
<svg style="left:506.5px;top:957.5px" width="14" height="14" viewBox="0 0 14 14"><rect x="4.6" y="0.7" width="4.8" height="12.6" rx="2.2" fill="#0b5f0b"/><rect x="0.7" y="4.6" width="12.6" height="4.8" rx="2.2" fill="#0b5f0b"/><rect x="5.6" y="1.7" width="2.8" height="10.6" rx="1.3" fill="#27b327"/><rect x="1.7" y="5.6" width="10.6" height="2.8" rx="1.3" fill="#27b327"/><rect x="6.2" y="2.4" width="1.2" height="4" fill="#8ae88a"/><rect x="2.4" y="6.2" width="4" height="1.2" fill="#8ae88a"/></svg>
<svg style="left:563px;top:957.5px" width="13" height="13" viewBox="0 0 13 13"><path d="M2.8 2.8L10.2 10.2M10.2 2.8L2.8 10.2" stroke="#9a1018" stroke-width="4.2" stroke-linecap="round"/><path d="M2.8 2.8L10.2 10.2M10.2 2.8L2.8 10.2" stroke="#ec3c48" stroke-width="2.6" stroke-linecap="round"/></svg>
<svg style="left:620px;top:957px" width="15" height="14" viewBox="0 0 15 14"><path d="M1.5 1.5C3 0.5 4.5 1 5 2.5L5.5 5H8.5V2L14 7.5L8.5 12.5V9.5H5C3 9.5 1.5 8 1.5 5.5Z" fill="#2aa52a" stroke="#0d5f0d" stroke-width="0.9"/></svg>
<div style="left:1751px;top:193px;width:148px;height:33px;background:#ff0000;box-sizing:border-box;"></div>
<div style="left:1763.80px;top:201.13px;font-size:15.5px;line-height:19px;color:#6a0000;white-space:nowrap;letter-spacing:0.841px;">Member Update</div>
<div style="left:1751px;top:229px;width:148px;height:37px;background:#0c3e8a;box-sizing:border-box;"></div>
<div style="left:1760.10px;top:238.83px;font-size:15.5px;line-height:19px;color:#001c46;white-space:nowrap;letter-spacing:0.538px;"><u>E</u>xtended Update</div>
<div style="left:1751px;top:269px;width:148px;height:34px;background:#09877f;box-sizing:border-box;"></div>
<div style="left:1770.70px;top:277.53px;font-size:15.5px;line-height:19px;color:#002b2b;white-space:nowrap;letter-spacing:0.414px;"><u>P</u>arent Update</div>
<div style="left:1751px;top:306px;width:148px;height:61px;background:#ff80ff;box-sizing:border-box;"></div>
<div style="left:1757.80px;top:316.33px;font-size:15.5px;line-height:19px;color:#3f0a46;white-space:nowrap;letter-spacing:0.457px;"><u>C</u>over Update with</div>
<div style="left:1810.50px;top:337.13px;font-size:15.5px;line-height:19px;color:#3f0a46;white-space:nowrap;letter-spacing:0.271px;">Age</div>
<div style="left:1752px;top:370px;width:146px;height:58px;background:#c8c8e8;box-sizing:border-box;border:1px solid #7e7e8e;"></div>
<div style="left:1771.90px;top:379.13px;font-size:15.5px;line-height:19px;color:#15152a;white-space:nowrap;letter-spacing:0.030px;">Update internal</div>
<div style="left:1773.60px;top:397.63px;font-size:15.5px;line-height:19px;color:#15152a;white-space:nowrap;letter-spacing:-0.280px;">cover start date</div>
<div style="left:1754px;top:563px;width:143px;height:47px;background:#b48be8;box-sizing:border-box;border:1px solid #5f4f78;"></div>
<div style="left:1779.20px;top:569.13px;font-size:15.5px;line-height:19px;color:#1c0a3c;white-space:nowrap;letter-spacing:0.129px;">Import Premium</div>
<div style="left:1806.00px;top:587.43px;font-size:15.5px;line-height:19px;color:#1c0a3c;white-space:nowrap;letter-spacing:-0.408px;">Structure</div>
<svg style="left:1757.5px;top:578.5px" width="17" height="15" viewBox="0 0 17 15"><defs><linearGradient id="xg2" x1="0" y1="0" x2="1" y2="1"><stop offset="0" stop-color="#93d893"/><stop offset="0.45" stop-color="#4cbc4c"/><stop offset="1" stop-color="#1f6f1f"/></linearGradient></defs><path d="M0.6 1.8L5.6 0.6L8.4 5.2L11.8 0.6L16.2 2L10.8 7.3L16.4 11.8L12.1 13.8L8.4 9.6L4.5 13.8L0.4 12.2L6 7.3Z" fill="url(#xg2)" stroke="#ffffff" stroke-width="1" stroke-opacity="0.7"/><path d="M15.2 2.6L10.6 7.2" stroke="#2b5e2b" stroke-width="1.6"/><path d="M1.2 11.6L4.6 12.8L7.8 10" stroke="#2b5e2b" stroke-width="1.5" fill="none"/><path d="M9 10.2L12.2 12.9L15.6 11.6" stroke="#2b5e2b" stroke-width="1.5" fill="none"/></svg>
</body></html>
